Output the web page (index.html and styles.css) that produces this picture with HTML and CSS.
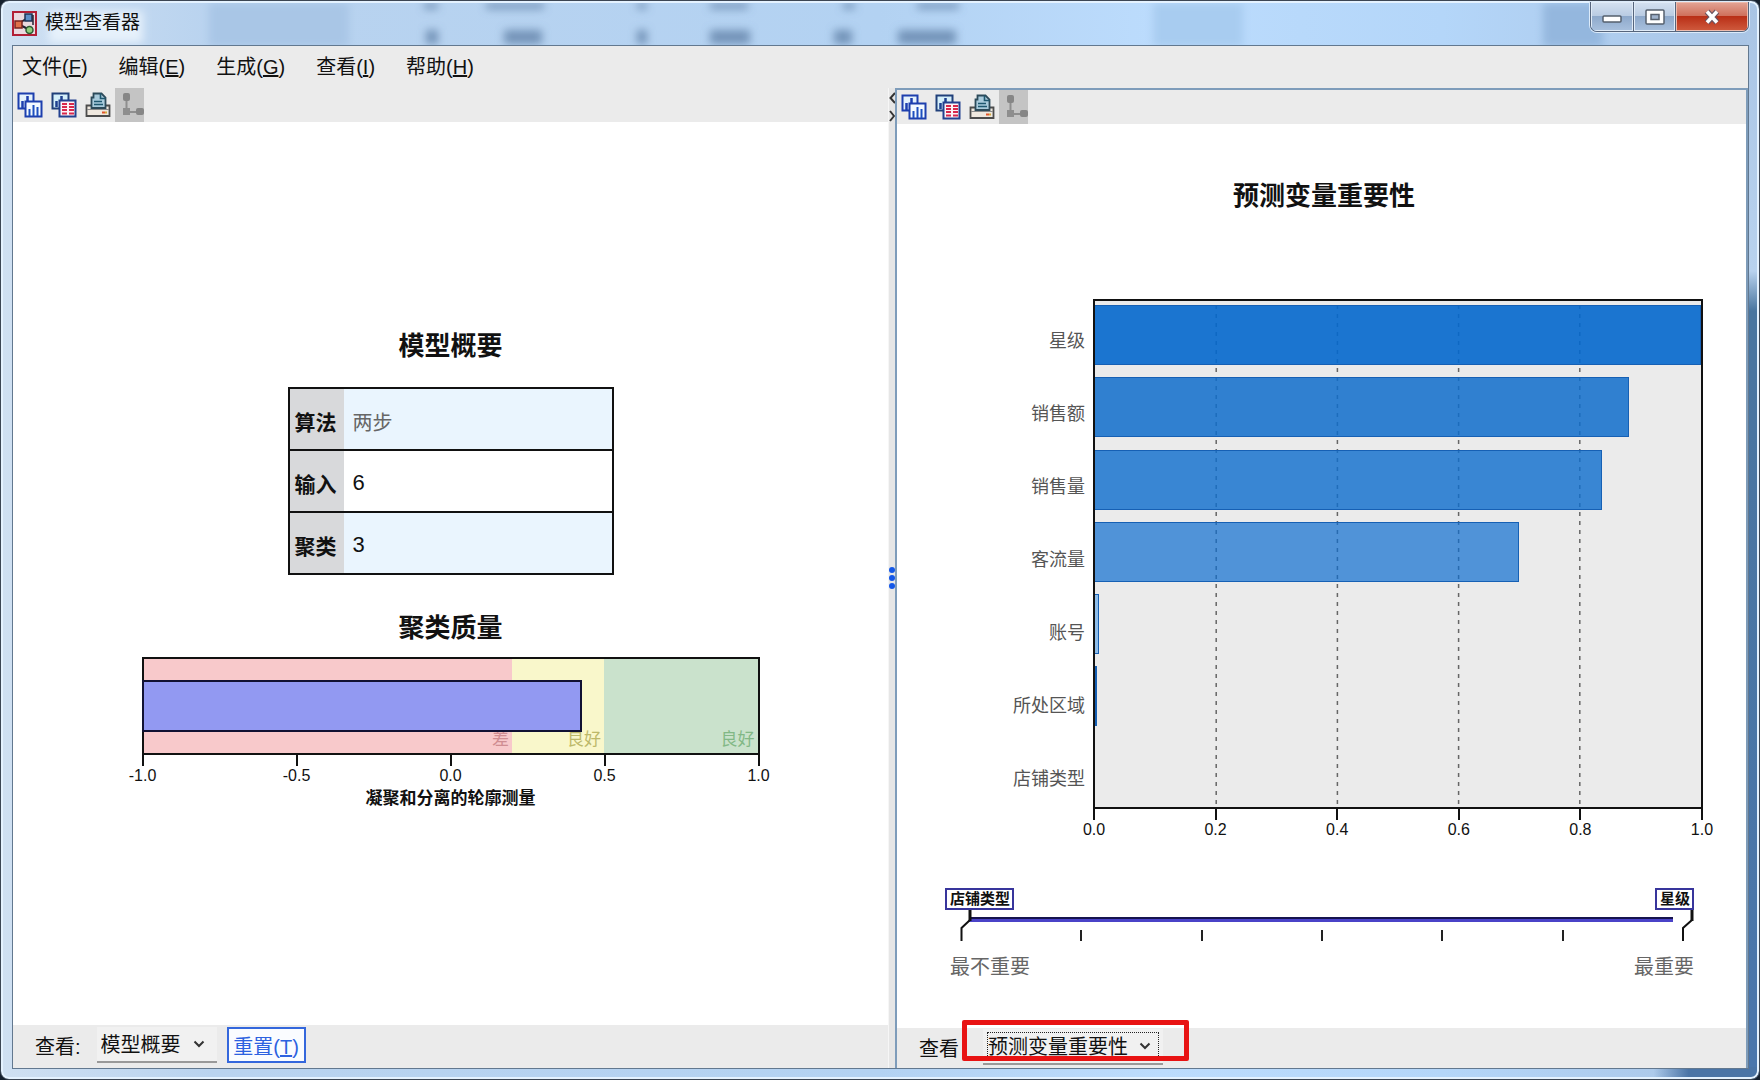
FILE: index.html
```html
<!DOCTYPE html>
<html lang="zh-CN">
<head>
<meta charset="utf-8">
<title>模型查看器</title>
<link rel="stylesheet" href="styles.css">
</head>
<body>
<svg class="defs" width="0" height="0" aria-hidden="true">
  <symbol id="icon-charts" viewBox="0 0 26 26">
    <path d="M1.5 1.5h15v15h-15z" fill="#e4f2fc" stroke="#1d3fae" stroke-width="2"/>
    <path d="M5.500 16V9M10.500 12V4" stroke="#1d3fae" stroke-width="2.500"/>
    <path d="M8.500 9.500h16v15h-16z" fill="#f4faff" stroke="#1d3fae" stroke-width="2"/>
    <path d="M12.500 24v-7M16.500 24V13M20.500 24v-9" stroke="#1d4fc0" stroke-width="2"/>
  </symbol>
  <symbol id="icon-tables" viewBox="0 0 26 26">
    <path d="M1.500 1.500h16v15h-16z" fill="#d4effa" stroke="#20407a" stroke-width="2"/>
    <path d="M5.500 15V9M10.500 10V4" stroke="#1d3f8e" stroke-width="2.500"/>
    <path d="M8.500 8.500h16v16h-16z" fill="#fdf3f6" stroke="#23418f" stroke-width="2"/>
    <path d="M11 12h5M11 15h5M11 18h5M11 21.500h5M18 12h5M18 15h5M18 18h5M18 21.500h5" stroke="#d8284c" stroke-width="2"/>
  </symbol>
  <symbol id="icon-print" viewBox="0 0 26 26">
    <path d="M1.500 13.500h23v10.500h-23z" fill="#efe8df" stroke="#4c4c4c" stroke-width="1.800"/>
    <path d="M2 17.500h22" stroke="#8a8a8a" stroke-width="1"/>
    <path d="M6.500 16V5.500h2V1.500h8l4 4V16z" fill="#a9cbdc" stroke="#2c4a5a" stroke-width="1.800"/>
    <path d="M15.500 1.500v5h5M9 9.500h8M9 12.500h9" fill="none" stroke="#1f5870" stroke-width="1.600"/>
    <path d="M17 20.500h3" stroke="#e0562a" stroke-width="2"/><path d="M20 20.500h2" stroke="#d4a93a" stroke-width="2"/>
  </symbol>
  <symbol id="icon-tree" viewBox="0 0 29 34">
    <path d="M11.500 9v15H25" fill="none" stroke="#8e8e8e" stroke-width="2"/>
    <rect x="8" y="5" width="7" height="8" rx="2" fill="#868686"/>
    <rect x="8" y="20" width="7" height="7" fill="#8e8e8e"/>
    <rect x="21" y="20" width="8" height="7" rx="2" fill="#868686"/>
  </symbol>
  <symbol id="icon-chevron" viewBox="0 0 12 8">
    <path d="M1.500 1.500L6 6l4.500-4.500" fill="none" stroke="#333" stroke-width="2"/>
  </symbol>
</svg>

<div class="window">
  <svg class="glass" aria-hidden="true">
    <defs><filter id="soft" x="-50%" y="-50%" width="200%" height="200%"><feGaussianBlur stdDeviation="4"/></filter></defs>
    <g filter="url(#soft)">
      <rect x="46" y="8" width="94" height="32" fill="#e6f1fb"/>
      <rect x="206" y="0" width="140" height="44" fill="#a9c6e6"/>
      <rect x="1150" y="0" width="90" height="44" fill="#a8ccf0"/>
      <rect x="1540" y="0" width="60" height="44" fill="#94b7de"/>
      <g fill="#5e7fa6" opacity=".75">
        <rect x="423" y="27" width="12" height="14"/><rect x="501" y="27" width="38" height="14"/>
        <rect x="634" y="27" width="10" height="14"/><rect x="707" y="27" width="40" height="14"/>
        <rect x="831" y="27" width="18" height="14"/><rect x="895" y="27" width="58" height="14"/>
        <rect x="421" y="0" width="14" height="6"/><rect x="483" y="0" width="58" height="6"/>
        <rect x="634" y="0" width="10" height="6"/><rect x="707" y="0" width="38" height="6"/>
        <rect x="840" y="0" width="12" height="6"/><rect x="914" y="0" width="42" height="6"/>
      </g>
    </g>
  </svg>

  <header class="titlebar">
    <svg class="app-icon" viewBox="0 0 25 25" aria-hidden="true">
      <rect x="1" y="1" width="23" height="23" fill="#ead9df" stroke="#b21f36" stroke-width="2"/>
      <path d="M6 13L17 6M6 13l12 6" stroke="#223" stroke-width="2"/>
      <rect x="3" y="10" width="7" height="7" fill="#e0704a" stroke="#7a2420" stroke-width="1.500"/>
      <rect x="13" y="3" width="7" height="7" fill="#5d8fc8" stroke="#1d3355" stroke-width="1.500"/>
      <circle cx="17.500" cy="19" r="3.500" fill="#8fce7c" stroke="#2c5a32" stroke-width="1.500"/>
      <path d="M21 4v10" stroke="#223" stroke-width="1.500"/>
    </svg>
    <h1 class="title">模型查看器</h1>
    <div class="window-buttons">
      <button class="wb wb-min" aria-label="最小化"><svg width="20" height="10" viewBox="0 0 20 10"><rect x="1" y="2" width="18" height="6" rx="1" fill="#fff" stroke="#56606e" stroke-width="1.500"/></svg></button>
      <button class="wb wb-max" aria-label="最大化"><svg width="20" height="16" viewBox="0 0 20 16"><rect x="1" y="1" width="18" height="14" rx="1" fill="#fff" stroke="#56606e" stroke-width="1.500"/><rect x="6" y="5.500" width="8" height="5" fill="#9fb2cc" stroke="#56606e" stroke-width="1.500"/></svg></button>
      <button class="wb wb-close" aria-label="关闭"><svg width="18" height="16" viewBox="0 0 18 16"><path d="M4 2.500l10 11M14 2.500L4 13.500" stroke="#6a5360" stroke-width="6"/><path d="M4 2.500l10 11M14 2.500L4 13.500" stroke="#fff" stroke-width="3.500"/></svg></button>
    </div>
  </header>

  <main class="client">
    <nav class="menubar">
      <button class="menu">文件(<u>F</u>)</button>
      <button class="menu">编辑(<u>E</u>)</button>
      <button class="menu">生成(<u>G</u>)</button>
      <button class="menu">查看(<u>I</u>)</button>
      <button class="menu">帮助(<u>H</u>)</button>
    </nav>

    <div class="workspace">
      <section class="pane">
        <div class="toolbar">
          <button class="tool" aria-label="图表"><svg><use href="#icon-charts"/></svg></button>
          <button class="tool" aria-label="表格"><svg><use href="#icon-tables"/></svg></button>
          <button class="tool" aria-label="打印"><svg><use href="#icon-print"/></svg></button>
          <button class="tool tool-off" aria-label="树" disabled><svg><use href="#icon-tree"/></svg></button>
        </div>
        <div class="view summary">
          <h2 class="heading">模型概要</h2>
          <table class="facts">
            <tr><th scope="row">算法</th><td class="muted">两步</td></tr>
            <tr><th scope="row">输入</th><td>6</td></tr>
            <tr><th scope="row">聚类</th><td>3</td></tr>
          </table>
          <h2 class="heading">聚类质量</h2>
          <div class="gauge">
            <div class="zones">
              <span class="zone poor">差</span><span class="zone fair">良好</span><span class="zone good">良好</span>
              <div class="gauge-bar" style="width:71.8%"></div>
            </div>
            <div class="axis"><span>-1.0</span><span>-0.5</span><span>0.0</span><span>0.5</span><span>1.0</span></div>
            <p class="axis-title">凝聚和分离的轮廓测量</p>
          </div>
        </div>
        <footer class="bar">
          <label class="bar-label" for="view-left">查看:</label>
          <span class="combo combo-left">
            <select id="view-left"><option>模型概要</option></select>
            <svg class="chevron"><use href="#icon-chevron"/></svg>
          </span>
          <button class="reset">重置(<u>T</u>)</button>
        </footer>
      </section>

      <div class="splitter">
        <svg class="collapse" width="6" height="30" viewBox="0 0 6 30"><path d="M6 1L1.500 6L6 11M1 19l4 5-4 5" fill="none" stroke="#333" stroke-width="2"/></svg>
        <svg class="grip" width="6" height="22" viewBox="0 0 6 22"><circle cx="3" cy="3" r="3" fill="#1458e8"/><circle cx="3" cy="11" r="3" fill="#1458e8"/><circle cx="3" cy="19" r="3" fill="#1458e8"/></svg>
      </div>

      <section class="pane pane-active">
        <div class="toolbar">
          <button class="tool" aria-label="图表"><svg><use href="#icon-charts"/></svg></button>
          <button class="tool" aria-label="表格"><svg><use href="#icon-tables"/></svg></button>
          <button class="tool" aria-label="打印"><svg><use href="#icon-print"/></svg></button>
          <button class="tool tool-off" aria-label="树" disabled><svg><use href="#icon-tree"/></svg></button>
        </div>
        <div class="view importance">
          <h2 class="heading">预测变量重要性</h2>
          <div class="chart">
            <div class="names">
              <span>星级</span><span>销售额</span><span>销售量</span><span>客流量</span><span>账号</span><span>所处区域</span><span>店铺类型</span>
            </div>
            <div class="plot">
              <svg class="grid-lines" aria-hidden="true">
                <g stroke="#666" stroke-width="1.500" stroke-dasharray="4 5">
                  <line x1="20%" x2="20%" y1="4" y2="100%"/><line x1="40%" x2="40%" y1="4" y2="100%"/><line x1="60%" x2="60%" y1="4" y2="100%"/><line x1="80%" x2="80%" y1="4" y2="100%"/>
                </g>
              </svg>
              <div class="row"><div class="col b1" style="width:100%"></div></div>
              <div class="row"><div class="col b2" style="width:88.2%"></div></div>
              <div class="row"><div class="col b3" style="width:83.6%"></div></div>
              <div class="row"><div class="col b4" style="width:70%"></div></div>
              <div class="row"><div class="col b5" style="width:0.6%"></div></div>
              <div class="row"><div class="col b6" style="width:0.3%"></div></div>
              <div class="row"></div>
            </div>
            <div class="axis"><span>0.0</span><span>0.2</span><span>0.4</span><span>0.6</span><span>0.8</span><span>1.0</span></div>
          </div>
          <div class="range">
            <div class="tags"><span class="tag">店铺类型</span><span class="tag">星级</span></div>
            <div class="track">
              <input class="line" type="range" min="0" max="6" value="0" aria-label="重要性">
              <div class="ticks"><i class="end"></i><i></i><i></i><i></i><i></i><i></i><i class="end"></i></div>
              <svg class="handle" width="28" height="31" viewBox="0 0 28 31"><path d="M25 0v11" stroke="#111" stroke-width="3"/><path d="M25 10l-8.500 8v13" fill="none" stroke="#111" stroke-width="2"/></svg>
              <svg class="handle handle-right" width="16" height="31" viewBox="0 0 16 31"><path d="M14 0v11" stroke="#111" stroke-width="3"/><path d="M14 10l-9 8v13" fill="none" stroke="#111" stroke-width="2"/></svg>
            </div>
            <div class="ends"><span>最不重要</span><span>最重要</span></div>
          </div>
        </div>
        <footer class="bar bar-right">
          <label class="bar-label" for="view-right">查看</label>
          <span class="combo combo-right">
            <select id="view-right"><option>预测变量重要性</option></select>
            <svg class="chevron"><use href="#icon-chevron"/></svg>
            <span class="marker"></span>
          </span>
        </footer>
      </section>
    </div>
  </main>
</div>
</body>
</html>
```
FILE: styles.css
```css
* { box-sizing: border-box; }

body {
  margin: 0;
  background: #15202e;
  color: #111;
  font-family: "Liberation Sans", "Noto Sans CJK SC", sans-serif;
  font-size: 20px;
}

h1, h2, p { margin: 0; }
button, select, input { font: inherit; color: inherit; margin: 0; padding: 0; border: 0; border-radius: 0; background: none; }
.defs { position: absolute; }

/* window frame */
.window {
  position: relative;
  display: flex;
  flex-direction: column;
  min-height: 100vh;
  padding: 1px 10px 10px 11px;
  border: 1px solid #3c4654;
  border-radius: 9px;
  box-shadow: inset 0 0 0 2px #e4f2ff;
  background:
    linear-gradient(90deg, transparent 94%, #4a74a6 96%) bottom / 100% 12px no-repeat,
    linear-gradient(180deg, #a9c4e4 0, #b8d2ee 270px, #49759f 310px, #4a76ac 100%) right / 12px 100% no-repeat,
    linear-gradient(90deg, #cfe0f2 0, #b9d3ef 12%, #b3d2f2 50%, #bcdcfd 66%, #b4d6f9 82%, #a9c4e4 100%);
}

.glass { position: absolute; top: 2px; left: 2px; width: calc(100% - 4px); height: 42px; }

.titlebar { position: relative; display: flex; align-items: flex-start; height: 43px; }
.app-icon { width: 25px; height: 25px; margin: 9px 8px 0 0; }
.title { font-size: 19px; font-weight: 400; line-height: 24px; margin-top: 9px; flex: 1; }

.window-buttons {
  display: flex;
  height: 30px;
  border: 1px solid #56657c;
  border-top: 0;
  border-radius: 0 0 7px 7px;
  overflow: hidden;
  box-shadow: 0 0 0 1px #dcebfa;
}
.wb { display: flex; align-items: center; justify-content: center; width: 42px; background: linear-gradient(#d5e2f1 0, #b9cbe2 48%, #8ea9cb 50%, #a9c1de 100%); box-shadow: inset 0 0 0 1px #e0ebf7; border-right: 1px solid #56657c; }
.wb-min { width: 43px; align-items: flex-end; padding-bottom: 7px; }
.wb-close { width: 72px; border: 0; background: linear-gradient(#e3a596 0, #cf6f5b 48%, #b92f17 50%, #cf5b3e 100%); box-shadow: inset 0 0 0 1px #edbcae; }

/* client area */
.client { position: relative; flex: 1; display: flex; flex-direction: column; border: 1px solid #62788f; background: #ebebeb; }
.menubar { display: flex; gap: 31px; height: 42px; padding: 0 9px; align-items: center; }
.menu { line-height: 24px; white-space: nowrap; }

.workspace { flex: 1; display: grid; grid-template-columns: 875fr 7px 853fr; }
.pane { display: flex; flex-direction: column; min-width: 0; }
.pane-active { border: 2px solid #7e9cba; border-bottom: 0; }

.toolbar { display: flex; align-items: stretch; gap: 8px; height: 34px; padding-left: 4px; }
.tool { display: flex; align-items: center; }
.tool svg { width: 26px; height: 26px; }
.tool-off { width: 29px; background: #c4c4c4; margin-left: -4px; }
.tool-off svg { width: 29px; height: 34px; }

.view { flex: 1; background: #fff; display: flex; flex-direction: column; }
.heading { font-size: 26px; font-weight: 700; line-height: 32px; text-align: center; }

/* splitter */
.splitter { display: flex; flex-direction: column; align-items: center; background: #e6e6e6; border-left: 1px solid #f6f6f6; }
.collapse { margin-top: 4px; }
.grip { margin: auto 0; transform: translateY(-17px); }

/* model summary */
.summary { align-items: center; justify-content: center; padding-bottom: 6px; }
.facts { width: 326px; margin: 25px 0 37px; border-collapse: collapse; border: 2px solid #111; }
.facts tr { height: 62px; border-top: 2px solid #111; background: #eaf5fe; }
.facts tr:nth-child(2) { background: #fff; }
.facts th { width: 55px; padding: 4px 0 0 5px; font-size: 21px; font-weight: 700; text-align: left; background: #d8d9db; white-space: nowrap; }
.facts td { padding: 4px 0 0 9px; font-size: 22px; }
.facts .muted { font-size: 20px; color: #666; }

.gauge { width: 100%; max-width: 618px; margin-top: 13px; }
.zones { position: relative; display: grid; grid-template-columns: 60fr 15fr 25fr; height: 98px; border: 2px solid #111; }
.zone { display: flex; align-items: flex-end; justify-content: flex-end; padding: 0 3px 3px; font-size: 17px; line-height: 20px; }
.poor { background: #f8c9cb; color: #d08d92; }
.fair { background: #f9f7cb; color: #bdb96a; }
.good { background: #cae2cc; color: #82b886; }
.gauge-bar { position: absolute; left: -2px; top: 21px; height: 52px; background: #9299f2; border: 2px solid #111133; }

.axis { display: flex; justify-content: space-between; margin: 0 1px; font-size: 16px; line-height: 18px; }
.axis span { display: flex; flex-direction: column; align-items: center; width: 0; white-space: nowrap; }
.axis span::before { content: ""; width: 2px; height: 11px; margin-bottom: 1px; background: #111; flex: none; }
.axis-title { font-size: 17px; font-weight: 700; line-height: 24px; text-align: center; margin-top: 2px; }

/* predictor importance */
.importance { padding: 56px 43px 49px 48px; }
.chart { flex: 1; display: grid; grid-template: 1fr auto / 148px 1fr; margin-top: 87px; }
.names { display: flex; flex-direction: column; padding: 3px 8px 0 0; margin-bottom: -4px; color: #555; font-size: 18px; text-align: right; }
.names span { flex: 1; display: flex; align-items: center; justify-content: flex-end; }
.plot { position: relative; display: flex; flex-direction: column; border: 2px solid #111; background: #ebebeb; min-height: 500px; }
.row { position: relative; flex: 1; padding-top: 4px; }
.col { height: 60px; border: 1px solid #1660b4; border-left: 0; }
.b1 { background: rgba(4, 104, 205, .9); }
.b2 { background: rgba(15, 109, 203, .85); }
.b3 { background: rgba(17, 111, 205, .82); }
.b4 { background: rgba(14, 109, 208, .7); }
.b5 { background: #8fbde8; }
.b6 { background: #1660b4; }
.grid-lines { position: absolute; top: 0; left: 0; width: 100%; height: 100%; }
.chart .axis { grid-column: 2; }

/* importance slider */
.range { margin: 49px 9px 0 0; }
.tags { display: flex; justify-content: space-between; }
.tag { height: 22px; padding: 0 2px 0 3px; border: 2px solid #38359c; font-size: 15px; font-weight: 700; line-height: 18px; }
.track { display: grid; height: 31px; }
.track > * { grid-area: 1 / 1; }
.line { appearance: none; align-self: start; width: auto; height: 5px; margin: 7px 21px 0 24px; background: linear-gradient(#17134f 0 2px, #4a43c8 2px 5px); }
.line::-webkit-slider-thumb { appearance: none; width: 1px; height: 5px; }
.ticks { display: flex; justify-content: space-between; align-self: end; height: 11px; margin: 0 10px 0 15px; }
.ticks i { width: 2px; background: #222; }
.ticks .end { background: none; }
.handle-right { justify-self: end; }
.ends { display: flex; justify-content: space-between; margin-top: 14px; padding-left: 5px; color: #666; line-height: 24px; }

/* bottom bars */
.bar { display: flex; align-items: center; height: 43px; padding: 0 0 3px 22px; }
.bar-right { height: 40px; padding-bottom: 2px; }
.bar-label { line-height: 24px; padding-top: 3px; white-space: nowrap; }
.combo { position: relative; display: flex; align-items: center; height: 36px; background: #f1f1f1; border-bottom: 2px solid #999; }
.combo select { appearance: none; width: 100%; height: 28px; padding: 2px 0 0 4px; outline: 0; }
.chevron { position: absolute; right: 12px; top: 13px; width: 12px; height: 8px; pointer-events: none; }
.combo-left { width: 120px; margin-left: 16px; }
.reset { height: 36px; width: 79px; margin-left: 10px; border: 2px solid #3467dc; background: #fafcff; color: #2d62e0; }
.combo-right { width: 180px; margin-left: 24px; }
.combo-right select { margin: 0 4px; padding: 2px 0 0; border: 1px dotted #222; }
.marker { position: absolute; left: -21px; top: -9px; width: 227px; height: 41px; border: 5px solid #e81313; border-radius: 2px; pointer-events: none; }
```
